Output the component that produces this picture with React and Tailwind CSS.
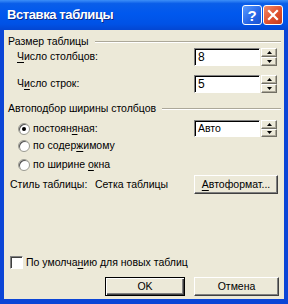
import React from "react";

const font = { fontFamily: '"Liberation Sans", Arial, sans-serif' };

const U = ({ children }) => <span className="underline underline-offset-[2px]">{children}</span>;

const Spinner = ({ h = "h-[18px]" }) => (
  <div className={`w-[16px] ${h} flex flex-col`}>
    <div className="flex-1 flex items-center justify-center bg-[#ece9d8] border border-t-white border-l-white border-b-[#716f64] border-r-[#716f64] shadow-[inset_-1px_-1px_0_#aca899]">
      <svg width="5" height="3" viewBox="0 0 5 3"><path d="M2.5 0 L5 3 L0 3 Z" fill="#000" /></svg>
    </div>
    <div className="flex-1 flex items-center justify-center bg-[#ece9d8] border border-t-white border-l-white border-b-[#716f64] border-r-[#716f64] shadow-[inset_-1px_-1px_0_#aca899]">
      <svg width="5" height="3" viewBox="0 0 5 3"><path d="M0 0 L5 0 L2.5 3 Z" fill="#000" /></svg>
    </div>
  </div>
);

const NumberBox = ({ value }) => (
  <div className="flex items-center gap-[1px]">
    <div className="w-[66px] h-[18px] bg-white border border-t-[#808080] border-l-[#808080] border-b-white border-r-white shadow-[inset_1px_1px_0_#000] flex items-center pl-[3px] text-[12px]">
      {value}
    </div>
    <Spinner />
  </div>
);

const GroupTitle = ({ children }) => (
  <div className="flex items-center h-[13px] pl-[4px] pr-[3px]">
    <span className="whitespace-nowrap">{children}</span>
    <div className="flex-1 ml-[6px] border-t border-t-[#aca899] border-b border-b-white" />
  </div>
);

const Radio = ({ checked, children }) => (
  <div className="flex items-center h-[17px] pl-[14px]">
    <div className="w-[12px] h-[12px] rounded-full bg-white border border-[#9a9a90] shadow-[inset_1px_1px_0_#555] flex items-center justify-center">
      {checked && <div className="w-[4px] h-[4px] rounded-full bg-black" />}
    </div>
    <span className="ml-[3px]">{children}</span>
  </div>
);

export default function App() {
  return (
    <div className="w-[288px] h-[304px] bg-[#0b45d6] flex flex-col overflow-hidden text-[10.5px] text-black" style={font}>
      {/* title bar */}
      <div className="h-[30px] flex items-center justify-between pl-[7px] pr-[5px] bg-[linear-gradient(180deg,#3d8ff8_0%,#0a5ee9_12%,#0058ee_45%,#0052e6_80%,#0346d2_100%)]">
        <span className="text-white font-bold text-[13px] tracking-[-0.4px] [text-shadow:1px_1px_0_#0a2a8a]">Вставка таблицы</span>
        <div className="flex gap-[1px]">
          <div className="w-[20px] h-[20px] rounded-[3px] border border-white bg-[linear-gradient(135deg,#5a9cff,#2564e6_60%,#1a52d0)] flex items-center justify-center text-white font-bold text-[15px] leading-none">?</div>
          <div className="w-[20px] h-[20px] rounded-[3px] border border-white bg-[linear-gradient(135deg,#f08a6a,#e0502e_55%,#c23b1c)] flex items-center justify-center">
            <svg width="12" height="12" viewBox="0 0 12 12"><path d="M2 2 L10 10 M10 2 L2 10" stroke="#fff" strokeWidth="2.2" strokeLinecap="square" /></svg>
          </div>
        </div>
      </div>

      {/* body */}
      <div className="flex-1 mx-[4px] mb-[5px] bg-[#ece9d8] flex flex-col pt-[5px]">
        <GroupTitle>Размер таблицы</GroupTitle>

        <div className="flex items-center h-[18px] pl-[13px]">
          <span className="w-[177px] shrink-0"><U>Ч</U>исло столбцов:</span>
          <NumberBox value="8" />
        </div>
        <div className="flex items-center h-[18px] pl-[13px] mt-[9px]">
          <span className="w-[177px] shrink-0">Ч<U>и</U>сло строк:</span>
          <NumberBox value="5" />
        </div>

        <div className="mt-[9px]">
          <GroupTitle>Автоподбор ширины столбцов</GroupTitle>
        </div>

        <div className="flex items-center justify-between mt-[5px] pr-[7px]">
          <Radio checked>постоян<U>я</U>ная:</Radio>
          <div className="flex items-center gap-[1px]">
            <div className="w-[66px] h-[17px] bg-white border border-t-[#808080] border-l-[#808080] border-b-white border-r-white shadow-[inset_1px_1px_0_#000] flex items-center pl-[3px]">Авто</div>
            <Spinner h="h-[17px]" />
          </div>
        </div>
        <Radio>по содер<U>ж</U>имому</Radio>
        <div className="mt-[2px]">
          <Radio>по ширине <U>о</U>кна</Radio>
        </div>

        <div className="flex items-center h-[19px] mt-[2px] pl-[6px]">
          <span className="w-[85px] shrink-0">Стиль таблицы:</span>
          <span className="w-[99px] shrink-0">Сетка таблицы</span>
          <div className="w-[84px] shrink-0 h-[19px] flex items-center justify-center bg-[#ece9d8] border border-t-white border-l-white border-b-[#404040] border-r-[#404040] shadow-[inset_-1px_-1px_0_#808080]">
            <span><U>А</U>втоформат...</span>
          </div>
        </div>

        <div className="flex items-center h-[13px] mt-[62px] pl-[6px]">
          <div className="w-[13px] h-[13px] bg-white border border-t-[#808080] border-l-[#808080] border-b-white border-r-white shadow-[inset_1px_1px_0_#404040]" />
          <span className="ml-[3px]">По умолча<U>н</U>ию для новых таблиц</span>
        </div>

        <div className="flex h-[19px] mt-[8px] pl-[101px] gap-[9px]">
          <div className="w-[80px] h-[19px] flex items-center justify-center border border-black shadow-[inset_1px_1px_0_#fff,inset_-1px_-1px_0_#404040,inset_-2px_-2px_0_#808080]">OK</div>
          <div className="w-[85px] h-[19px] flex items-center justify-center border border-t-white border-l-white border-b-[#404040] border-r-[#404040] shadow-[inset_-1px_-1px_0_#808080]">Отмена</div>
        </div>
      </div>
    </div>
  );
}
